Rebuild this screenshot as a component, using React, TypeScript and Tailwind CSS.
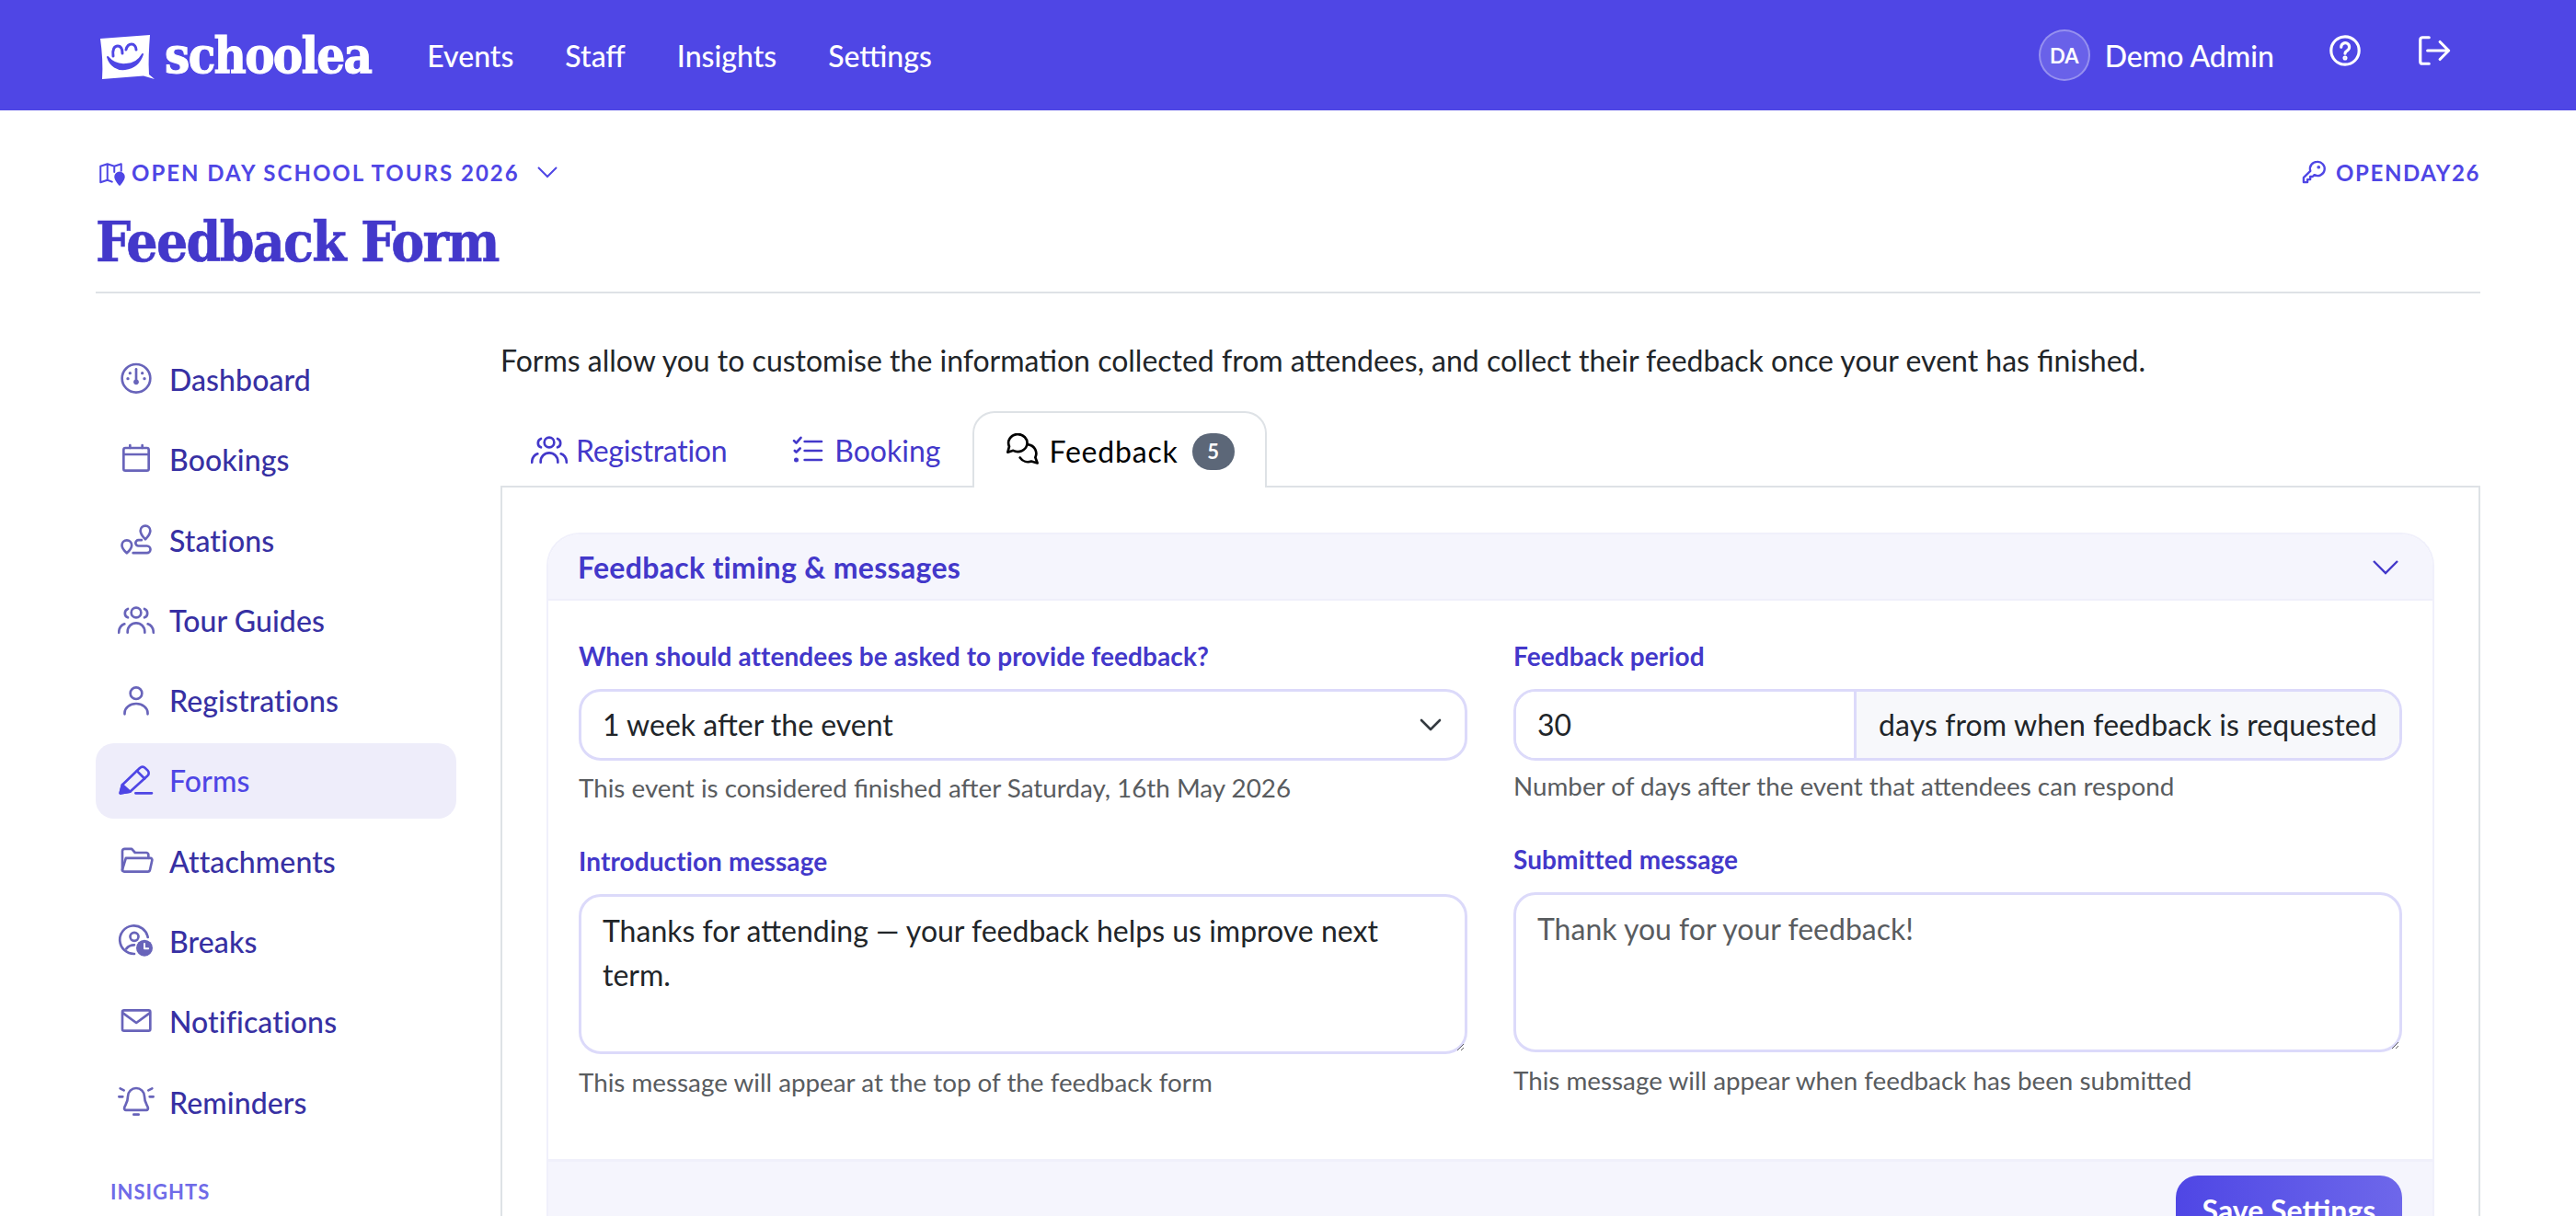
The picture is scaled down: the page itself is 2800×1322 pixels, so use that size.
import type { ReactNode } from "react";

function Ico({ children, className }: { children: ReactNode; className?: string }) {
  return (
    <svg viewBox="0 0 24 24" fill="none" stroke="currentColor" strokeWidth={1.6} strokeLinecap="round" strokeLinejoin="round" className={className}>
      {children}
    </svg>
  );
}

const side = "h-10 w-10 shrink-0";

function UsersGlyph() {
  return (
    <>
      <circle cx="12" cy="6.6" r="3.2" />
      <path d="M6.4 19.6v-.6a5.6 5.6 0 0 1 11.2 0v.6" />
      <path d="M6.6 4.2a3 3 0 0 0 0 5.6" />
      <path d="M17.4 4.2a3 3 0 0 1 0 5.6" />
      <path d="M.7 19.6c.1-2.7 1.5-4.8 3.7-5.6" />
      <path d="M23.3 19.6c-.1-2.7-1.5-4.8-3.7-5.6" />
    </>
  );
}

const navItems: { label: string; icon: ReactNode; active?: boolean }[] = [
  {
    label: "Dashboard",
    icon: (
      <>
        <circle cx="12" cy="11" r="9.2" />
        <path d="M12 5v7" />
        <circle cx="12" cy="13.4" r="1.7" fill="currentColor" stroke="none" />
        <circle cx="8" cy="7.6" r="1" fill="currentColor" stroke="none" />
        <circle cx="16" cy="7.6" r="1" fill="currentColor" stroke="none" />
        <circle cx="6.6" cy="11.2" r="1" fill="currentColor" stroke="none" />
        <circle cx="17.4" cy="11.2" r="1" fill="currentColor" stroke="none" />
      </>
    ),
  },
  {
    label: "Bookings",
    icon: (
      <>
        <rect x="3.8" y="4.2" width="16.4" height="14.8" rx="1.2" />
        <path d="M3.8 8.4h16.4M8 2.4v1.8M16 2.4v1.8" />
      </>
    ),
  },
  {
    label: "Stations",
    icon: (
      <>
        <path d="M18 11c-1.8-1.8-3.2-3.6-3.2-5.6a3.2 3.2 0 0 1 6.4 0c0 2-1.4 3.8-3.2 5.6Z" />
        <path d="M5.9 20c-1.8-1.7-3.2-3.2-3.2-5.2a3.2 3.2 0 0 1 6.4 0c0 2-1.4 3.5-3.2 5.2Z" />
        <path d="M15.5 11.5h-2a1.9 1.9 0 0 0 0 3.8h5.5a2.3 2.3 0 0 1 0 4.6H10" />
      </>
    ),
  },
  { label: "Tour Guides", icon: <UsersGlyph /> },
  {
    label: "Registrations",
    icon: (
      <>
        <circle cx="12" cy="7" r="3.8" />
        <path d="M4.5 20.6v-.8a7.5 6 0 0 1 15 0v.8" />
      </>
    ),
  },
  {
    label: "Forms",
    active: true,
    icon: (
      <>
        <path d="M1.6 20 3 14.5 14.5 3.5a2.3 2.3 0 0 1 3.3 0l1.7 1.7a2.3 2.3 0 0 1 0 3.3L8 19 1.6 20Z" />
        <path d="M1.6 20 3 14.5 8 19 1.6 20Z" fill="currentColor" />
        <path d="m12.5 5.5 5 5M11.6 20h10.6" />
      </>
    ),
  },
  {
    label: "Attachments",
    icon: (
      <>
        <path d="M3 17.6V5a1.5 1.5 0 0 1 1.5-1.5h4.6L11.3 6h7.4A1.5 1.5 0 0 1 20 7.5v2" />
        <path d="M5.3 9.5h15.9a1.2 1.2 0 0 1 1.2 1.5l-1.4 6.3a1.4 1.4 0 0 1-1.4 1.1H4.2A1.2 1.2 0 0 1 3 17l2.3-7.5Z" />
      </>
    ),
  },
  {
    label: "Breaks",
    icon: (
      <>
        <path d="M19.6 9A9.2 9.2 0 1 0 10.8 19.8" />
        <circle cx="10.8" cy="8.6" r="2.7" />
        <path d="M5.6 16.4c1.2-1.6 3-2.4 5.2-2.4" />
        <circle cx="17.4" cy="16" r="5.4" fill="currentColor" stroke="none" />
        <path d="M17.4 13.2v3.1h2.5" stroke="#fff" strokeWidth={1.2} />
      </>
    ),
  },
  {
    label: "Notifications",
    icon: (
      <>
        <rect x="3" y="4.4" width="18.2" height="13.4" rx="1.1" />
        <path d="m3.4 6.2 8.7 6.4 8.7-6.4" />
      </>
    ),
  },
  {
    label: "Reminders",
    icon: (
      <>
        <path d="M12 2.4a5.4 5.4 0 0 0-5.4 5.4c0 4-1.8 5.6-2.3 7.4-.2.9.3 1.5 1 1.5h13.4c.7 0 1.2-.6 1-1.5-.5-1.8-2.3-3.4-2.3-7.4A5.4 5.4 0 0 0 12 2.4Z" />
        <path d="M10.4 19.6h3.2M.8 8h2.4M20.8 8h2.4M1.6 2.6 4 3.8M22.4 2.6 20 3.8" />
      </>
    ),
  },
];

function Sidebar() {
  return (
    <aside className="w-[392px] shrink-0 pt-[4px]">
      <nav className="flex flex-col gap-[5.3px]">
        {navItems.map((item) => (
          <a
            key={item.label}
            className={
              item.active
                ? "flex h-[82px] items-center gap-[16px] rounded-[20px] bg-[#eeedfa] pl-[24px] text-[#4f46e5]"
                : "flex h-[82px] items-center gap-[16px] rounded-[20px] pl-[24px] text-[#3730a3]"
            }
          >
            <span className={item.active ? "text-[#4f46e5]" : "text-[#6864ba]"}>
              <Ico className={side}>{item.icon}</Ico>
            </span>
            <span className="text-[32px] font-medium tracking-[0.1px]">{item.label}</span>
          </a>
        ))}
      </nav>
      <div className="mt-[44px] pl-[16px] text-[22px] font-bold uppercase leading-[24px] tracking-[1px] text-[#6f6be8]">Insights</div>
    </aside>
  );
}

function Header() {
  return (
    <header className="flex h-[120px] items-center bg-[#4f46e5] pl-[108px] pr-[136px] text-white">
      <div className="flex items-center gap-[11px]">
        <svg viewBox="0 0 60 50" className="h-[50px] w-[60px] translate-y-[2px]">
          <path d="M1 5 55 1c-1 14-2 28-1 43l6 5-12-3.500L3 49C4 34 3 20 1 5Z" fill="#fff" />
          <path d="M9 25c3 10 11 14 19 13 9-1 16-7 19-16-4 7-10 11-18 11-9 1-15-2-20-8Z" fill="#4f46e5" stroke="#4f46e5" strokeWidth="2" strokeLinejoin="round" />
          <path d="M15 24c-1-7 1-11 5-11s5 4 5 8M29 17c1-4 3-6 6-6s5 3 5 6" fill="none" stroke="#4f46e5" strokeWidth="3" strokeLinecap="round" />
        </svg>
        <span className="font-['DejaVu_Serif_Condensed','DejaVu_Serif',serif] text-[54px] font-bold leading-none tracking-[-1.7px] [-webkit-text-stroke:1px_white]">schoolea</span>
      </div>
      <nav className="ml-[61px] flex items-center gap-[56px] pt-[2px] text-[32px] font-medium">
        <a>Events</a>
        <a>Staff</a>
        <a>Insights</a>
        <a>Settings</a>
      </nav>
      <div className="ml-auto flex items-center">
        <div className="flex h-[56px] w-[56px] items-center justify-center rounded-full border-2 border-white/30 bg-white/15 text-[22px] font-bold">DA</div>
        <span className="ml-[16px] pt-[1px] text-[32px] font-medium">Demo Admin</span>
        <svg viewBox="0 0 24 24" fill="none" stroke="currentColor" strokeWidth={2} strokeLinecap="round" className="ml-[58px] h-[38px] w-[38px] -translate-y-[5px]">
          <circle cx="12" cy="12" r="9.6" />
          <path d="M9.3 9.6a2.8 2.8 0 1 1 4.3 2.3c-.9.6-1.6 1.1-1.6 2.1" />
          <circle cx="12" cy="17" r=".6" fill="currentColor" />
        </svg>
        <svg viewBox="0 0 24 24" fill="none" stroke="currentColor" strokeWidth={2} strokeLinecap="round" strokeLinejoin="round" className="ml-[58px] h-[38px] w-[38px] -translate-y-[5px]">
          <path d="M9 3H4.500A1.500 1.500 0 0 0 3 4.500v15A1.500 1.500 0 0 0 4.500 21H9" />
          <path d="M8 12h14M16.500 6l6 6-6 6" />
        </svg>
      </div>
    </header>
  );
}

function PageTitle() {
  return (
    <div className="pt-[47px]">
      <div className="flex h-[40px] items-center justify-between text-[#4f46e5]">
        <div className="flex items-center">
          <svg viewBox="0 0 24 24" fill="none" stroke="currentColor" strokeWidth={1.6} strokeLinecap="round" strokeLinejoin="round" className="ml-[4px] h-[30px] w-[30px]">
            <path d="M1 7l6-2 6 2 6-2v6M7 5v14M13 7v5M1 7v14l6-2 4 1.500" />
            <path d="M17.600 23c-2.400-2.800-3.800-4.700-3.800-6.800a3.800 3.800 0 0 1 7.600 0c0 2.100-1.400 4-3.800 6.800Z" fill="currentColor" />
          </svg>
          <span className="ml-[5px] pt-[1px] text-[24px] font-bold uppercase tracking-[2px]">Open Day School Tours 2026</span>
          <svg viewBox="0 0 24 16" fill="none" stroke="currentColor" strokeWidth={2} className="ml-[18px] h-[16px] w-[24px]">
            <path d="m2 3 10 10L22 3" />
          </svg>
        </div>
        <div className="flex items-center">
          <svg viewBox="0 0 24 24" fill="none" stroke="currentColor" strokeWidth={2} strokeLinejoin="round" className="h-[28px] w-[28px]">
            <path d="M15 2.500a6.500 6.500 0 0 0-6.200 8.500L2.500 17.300V21.500h3.600v-2.600h2.600v-2.600h2.200l1.600-1.600a6.500 6.500 0 1 0 2.500-12.200Z" />
            <circle cx="16.500" cy="7.500" r=".6" fill="currentColor" />
          </svg>
          <span className="ml-[10px] pt-[1px] text-[24px] font-bold tracking-[1.600px]">OPENDAY26</span>
        </div>
      </div>
      <h1 className="mt-[14px] font-['DejaVu_Serif_Condensed','DejaVu_Serif',serif] text-[60px] font-bold leading-[84px] tracking-[-1.7px] text-[#4338ca] [-webkit-text-stroke:0.6px_#4338ca]">Feedback Form</h1>
      <div className="mt-[12px] h-[2px] bg-[#dee2e6]" />
    </div>
  );
}

function Tabs() {
  return (
    <div className="relative z-10 -mb-[2px] flex h-[83px] text-[32px] text-[#4338ca]">
      <a className="flex items-center gap-[9px] pl-[33px] pr-[33px] pt-[2px] tracking-[-0.3px]">
        <Ico className="h-10 w-10"><UsersGlyph /></Ico>
        Registration
      </a>
      <a className="flex items-center gap-[9px] pl-[35px] pr-[35px] pt-[2px]">
        <Ico className="h-10 w-10">
          <path d="M10 6h11M10 12h11M10 18h11" />
          <path d="m3 5.500 1.500 1.500L7.500 3.500M3.500 12l1 1 2.500-2.500" />
          <circle cx="4.500" cy="18" r=".7" fill="currentColor" />
        </Ico>
        Booking
      </a>
      <a className="flex items-center gap-[8px] rounded-t-[24px] border-2 border-b-0 border-[#dee2e6] bg-white pl-[33px] pr-[33px] pt-[2px] text-black">
        <Ico className="h-10 w-10">
          <path d="M2 12.400 3 8.600A6.100 5.700 0 1 1 5.600 11.300L2 12.400Z" />
          <path d="M15.500 7.400a5.900 5.900 0 0 1 4.500 8.400l1.400 3.700-4-1.200a6.400 6.400 0 0 1-7.400-2.400" />
        </Ico>
        <span className="tracking-[0.8px]">Feedback</span>
        <span className="ml-[7px] flex h-[40px] w-[46px] items-center justify-center rounded-full bg-[#5c6778] text-[22px] font-bold text-white">5</span>
      </a>
    </div>
  );
}

const label = "block text-[28px] font-bold leading-[40px] tracking-[0.1px] text-[#4338ca]";
const helper = "text-[27.8px] leading-[40px] text-[#595c5f]";
const control = "rounded-[24px] border-[3px] border-[#dcdafa] bg-white";

function FormCard() {
  return (
    <div className="overflow-hidden rounded-t-[36px] border-x-2 border-t-2 border-[#f0f0fb]">
      <div className="flex h-[72px] items-center justify-between border-b-2 border-[#efeffa] bg-[#f5f5fd] pl-[32px] pr-[36px] pt-[2px]">
        <span className="text-[32px] font-bold tracking-[0.3px] text-[#4338ca]">Feedback timing &amp; messages</span>
        <svg viewBox="0 0 30 18" fill="none" stroke="currentColor" strokeWidth={2.4} className="h-[18px] w-[30px] text-[#4338ca]">
          <path d="m2 2 13 13L28 2" />
        </svg>
      </div>
      <div className="grid h-[607px] grid-cols-2 gap-[50px] px-[33px] pt-[40px]">
        <div className="flex flex-col">
          <label className={label}>When should attendees be asked to provide feedback?</label>
          <div className="relative mt-[16px]">
            <select className={`${control} h-[78px] w-full appearance-none pl-[23px] text-[32px] text-[#212529]`} defaultValue="1w">
              <option value="1w">1 week after the event</option>
            </select>
            <svg viewBox="0 0 24 16" fill="none" stroke="#343a40" strokeWidth={2.6} strokeLinecap="round" strokeLinejoin="round" className="pointer-events-none absolute right-[28px] top-[31px] h-[16px] w-[24px]">
              <path d="m2 3 10 10L22 3" />
            </svg>
          </div>
          <p className={`${helper} mt-[10px]`}>This event is considered finished after Saturday, 16th May 2026</p>
          <label className={`${label} mt-[39px]`}>Introduction message</label>
          <textarea
            readOnly
            className={`${control} mt-[16px] h-[174px] w-full px-[23px] py-[13px] text-[32px] leading-[48px] text-[#212529]`}
            defaultValue="Thanks for attending — your feedback helps us improve next term."
          />
          <p className={`${helper} mt-[11px]`}>This message will appear at the top of the feedback form</p>
        </div>
        <div className="flex flex-col">
          <label className={label}>Feedback period</label>
          <div className={`${control} mt-[16px] flex h-[78px] overflow-hidden text-[32px] text-[#212529]`}>
            <input readOnly defaultValue="30" className="w-[367px] bg-white pl-[23px]" />
            <span className="flex flex-1 items-center border-l-[3px] border-[#dcdafa] bg-[#f7f8fb] pl-[24px] tracking-[0.1px]">days from when feedback is requested</span>
          </div>
          <p className={`${helper} mt-[8px]`}>Number of days after the event that attendees can respond</p>
          <label className={`${label} mt-[39px]`}>Submitted message</label>
          <textarea
            readOnly
            placeholder="Thank you for your feedback!"
            className={`${control} mt-[16px] h-[174px] w-full px-[23px] py-[13px] text-[32px] leading-[48px] placeholder:text-[#595c5f]`}
          />
          <p className={`${helper} mt-[11px]`}>This message will appear when feedback has been submitted</p>
        </div>
      </div>
      <div className="flex justify-end border-t-[3px] border-[#f0f0fb] bg-[#f5f5fd] px-[33px] pb-[24px] pt-[15px]">
        <button className="h-[76px] w-[246px] rounded-[24px] bg-gradient-to-r from-[#4f46e5] to-[#6e67ea] text-[32px] font-bold text-white">Save Settings</button>
      </div>
    </div>
  );
}

export default function App() {
  return (
    <div className="h-[1322px] overflow-hidden bg-white font-['Lato',sans-serif] text-[32px]">
      <Header />
      <div className="mx-[104px]">
        <PageTitle />
        <div className="flex gap-[48px] pt-[49px]">
          <Sidebar />
          <main className="min-w-0 flex-1">
            <p className="text-[32px] leading-[48px] text-[#212529]">
              Forms allow you to customise the information collected from attendees, and collect their feedback once your event has finished.
            </p>
            <div className="mt-[31px]">
              <Tabs />
              <div className="border-2 border-[#dee2e6] px-[48px] pt-[49px]">
                <FormCard />
              </div>
            </div>
          </main>
        </div>
      </div>
    </div>
  );
}
